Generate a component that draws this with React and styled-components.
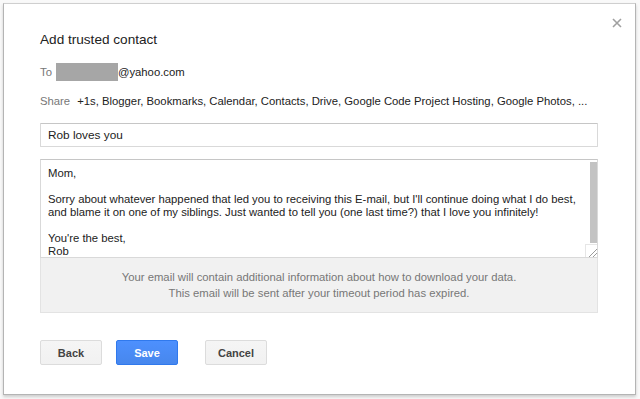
import styled, { createGlobalStyle } from "styled-components"

const GlobalStyle = createGlobalStyle`
  html, body {
    margin: 0;
    background: #f9f9f9;
    font-family: "Liberation Sans", Arial, sans-serif;
  }
`

const message = `Mom,

Sorry about whatever happened that led you to receiving this E-mail, but I'll continue doing what I do best,
and blame it on one of my siblings. Just wanted to tell you (one last time?) that I love you infinitely!

You're the best,
Rob`

function App() {
  return (
    <Page>
      <GlobalStyle />
      <Dialog>
        <Close aria-label="Close">
          <svg width="10" height="10" viewBox="0 0 10 10">
            <path d="M1 1L9 9M9 1L1 9" stroke="#a0a0a0" strokeWidth="1.6" />
          </svg>
        </Close>
        <Title>Add trusted contact</Title>
        <Row top={15}>
          <Label>To</Label>
          <Redacted />
          <span>@yahoo.com</span>
        </Row>
        <Row top={11}>
          <Label gap={7}>Share</Label>
          <span>+1s, Blogger, Bookmarks, Calendar, Contacts, Drive, Google Code Project Hosting, Google Photos, ...</span>
        </Row>
        <Subject defaultValue="Rob loves you" />
        <BodyWrap>
          <Body defaultValue={message} wrap="off" />
          <ScrollThumb />
          <Corner />
        </BodyWrap>
        <Info>
          Your email will contain additional information about how to download your data.
          <br />
          This email will be sent after your timeout period has expired.
        </Info>
        <Buttons>
          <Button>Back</Button>
          <Button primary>Save</Button>
          <Button spaced>Cancel</Button>
        </Buttons>
      </Dialog>
    </Page>
  )
}

export default App

const Page = styled.div`
  padding: 3px;
  height: 399px;
  box-sizing: border-box;
`

const Dialog = styled.div`
  position: relative;
  box-sizing: border-box;
  width: 633px;
  height: 392px;
  padding: 28px 36px 0;
  background: #fff;
  border: 1px solid #b4b4b4;
  border-top-color: #cfcfcf;
  box-shadow: 0 2px 3px rgba(0, 0, 0, 0.18);
  display: flex;
  flex-direction: column;
`

const Close = styled.div`
  position: absolute;
  top: 14px;
  right: 13px;
  width: 10px;
  height: 10px;
  display: flex;
`

const Title = styled.h1`
  margin: 0;
  font-size: 13.6px;
  line-height: 16px;
  font-weight: normal;
  color: #222;
`

const Row = styled.div`
  margin-top: ${p => p.top}px;
  display: flex;
  align-items: center;
  height: 18px;
  font-size: 11.3px;
  color: #222;
  white-space: nowrap;
`

const Label = styled.span`
  color: #777;
  margin-right: ${p => p.gap || 4}px;
`

const Redacted = styled.span`
  width: 62px;
  height: 18px;
  background: #a6a6a6;
`

const Subject = styled.input`
  margin-top: 13px;
  box-sizing: border-box;
  width: 558px;
  height: 24px;
  padding: 0 7px;
  border: 1px solid #d9d9d9;
  border-top-color: #c6c6c6;
  border-radius: 1px;
  font-family: "Liberation Sans", Arial, sans-serif;
  font-size: 11.8px;
  color: #222;
  outline: none;
`

const BodyWrap = styled.div`
  position: relative;
  margin-top: 12px;
  width: 558px;
  height: 99px;
`

const Body = styled.textarea`
  display: block;
  box-sizing: border-box;
  width: 100%;
  height: 100%;
  padding: 7px 7px;
  border: 1px solid #d9d9d9;
  border-top-color: #c6c6c6;
  font-family: "Liberation Sans", Arial, sans-serif;
  font-size: 11.3px;
  line-height: 13px;
  color: #222;
  resize: none;
  overflow: hidden;
  outline: none;
`

const ScrollThumb = styled.div`
  position: absolute;
  top: 3px;
  right: 1px;
  width: 7px;
  height: 81px;
  background: #c3c3c3;
`

const Corner = styled.div`
  position: absolute;
  right: 1px;
  bottom: 1px;
  width: 11px;
  height: 12px;
  border-left: 1px solid #e6e6e6;
  border-top: 1px solid #e6e6e6;
  background:
    linear-gradient(135deg, transparent 62%, #9a9a9a 62%, #9a9a9a 68%, transparent 68%, transparent 80%, #9a9a9a 80%, #9a9a9a 86%, transparent 86%);
`

const Info = styled.div`
  box-sizing: border-box;
  width: 558px;
  height: 55px;
  padding-top: 11px;
  background: #f1f1f1;
  border: 1px solid #e3e3e3;
  border-top: none;
  text-align: center;
  font-size: 11.3px;
  line-height: 16px;
  color: #777;
`

const Buttons = styled.div`
  margin-top: 27px;
  display: flex;
  gap: 14px;
`

const Button = styled.button`
  box-sizing: border-box;
  width: 62px;
  height: 25px;
  margin-left: ${p => (p.spaced ? 13 : 0)}px;
  border-radius: 2px;
  font-family: "Liberation Sans", Arial, sans-serif;
  font-size: 11px;
  font-weight: bold;
  color: ${p => (p.primary ? "#fff" : "#444")};
  background: ${p => (p.primary ? "linear-gradient(#4d90fe, #4787ed)" : "linear-gradient(#f5f5f5, #f1f1f1)")};
  border: 1px solid ${p => (p.primary ? "#3079ed" : "#dcdcdc")};
  padding: 0;
`
